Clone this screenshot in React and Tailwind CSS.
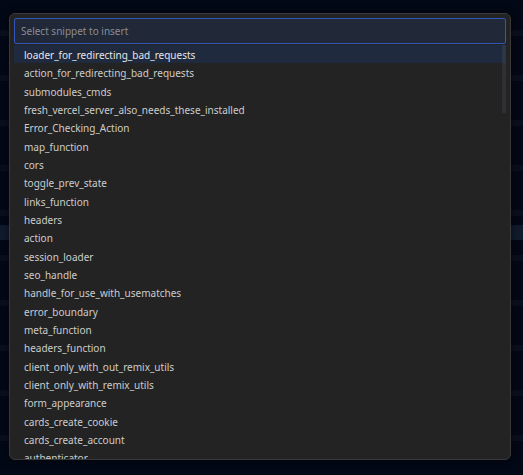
import React from "react";

const items = [
  "loader_for_redirecting_bad_requests",
  "action_for_redirecting_bad_requests",
  "submodules_cmds",
  "fresh_vercel_server_also_needs_these_installed",
  "Error_Checking_Action",
  "map_function",
  "cors",
  "toggle_prev_state",
  "links_function",
  "headers",
  "action",
  "session_loader",
  "seo_handle",
  "handle_for_use_with_usematches",
  "error_boundary",
  "meta_function",
  "headers_function",
  "client_only_with_out_remix_utils",
  "client_only_with_remix_utils",
  "form_appearance",
  "cards_create_cookie",
  "cards_create_account",
  "authenticator",
];

export default function App() {
  return (
    <div
      className="relative w-[523px] h-[475px] overflow-hidden bg-[#030816]"
      style={{ fontFamily: '"Noto Sans", "Open Sans", sans-serif' }}
    >
      {/* background rows */}
      <div className="flex flex-col pt-[30px]">
        <div className="h-[6px] bg-[#0a0f1d]" />
        <div className="h-[6px] mt-[39px] bg-[#0a0f1d]" />
        <div className="h-[6px] mt-[39px] bg-[#0a0f1d]" />
        <div className="h-[6px] mt-[39px] bg-[#0a0f1d]" />
        <div className="h-[6px] mt-[39px] bg-[#0a0f1d]" />
        <div className="h-[15px] mt-[9px] bg-[#111b2e]" />
        <div className="h-[6px] mt-[15px] bg-[#0a0f1d]" />
        <div className="h-[6px] mt-[39px] bg-[#0a0f1d]" />
        <div className="h-[6px] mt-[39px] bg-[#0a0f1d]" />
        <div className="h-[6px] mt-[39px] bg-[#0a0f1d]" />
        <div className="h-[6px] mt-[39px] bg-[#0a0f1d]" />
      </div>

      {/* quick pick panel */}
      <div className="absolute left-[9px] top-[13px] w-[502px] h-[447px] rounded-[6px] border border-[#3a3a3c] bg-[#232323] shadow-[0_0_8px_rgba(0,0,0,0.6)] overflow-hidden flex flex-col px-[4px] pt-[4px]">
        <div className="h-[26px] shrink-0 rounded-[2px] border border-[#3156b8] bg-[#212838] flex items-center px-[6px] text-[10px] text-[#8a8d93]">
          Select snippet to insert
        </div>
        <div className="relative mt-[1px] flex-1 overflow-hidden">
          {items.map((t, i) => (
            <div
              key={t}
              className={
                "h-[18.33px] pt-[1px] leading-[18.33px] pl-[10px] text-[10px] whitespace-nowrap overflow-hidden " +
                (i === 0 ? "bg-[#1f2a3e] text-[#e6e6e6]" : "text-[#cccccc]")
              }
            >
              {t}
            </div>
          ))}
          <div className="absolute right-0 top-0 w-[4px] h-[68px] bg-[rgba(100,110,130,0.18)]" />
        </div>
      </div>
    </div>
  );
}
